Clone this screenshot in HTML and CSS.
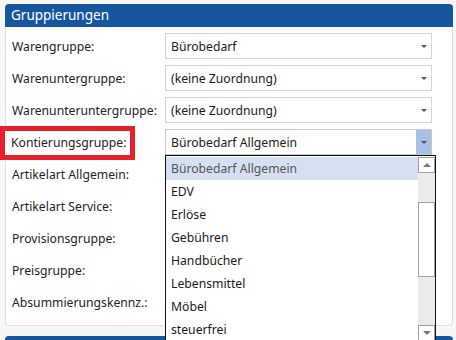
FILE: index.html
```html
<!DOCTYPE html>
<html>
<head>
<title>Gruppierungen</title>
<link rel="stylesheet" href="styles.css">
</head>
<body>
<div class="page">
	<div class="panel">
		<div class="panel_head">Gruppierungen</div>
		<div class="panel_body">
			<div class="row">
				<span class="lbl">Warengruppe:</span>
				<div class="combo"><span>Bürobedarf</span><i class="arrow"></i></div>
			</div>
			<div class="row">
				<span class="lbl">Warenuntergruppe:</span>
				<div class="combo"><span>(keine Zuordnung)</span><i class="arrow"></i></div>
			</div>
			<div class="row">
				<span class="lbl">Warenunteruntergruppe:</span>
				<div class="combo"><span>(keine Zuordnung)</span><i class="arrow"></i></div>
			</div>
			<div class="row">
				<span class="lbl marked"><span class="mark">Kontierungsgruppe:</span></span>
				<div class="combo open"><span>Bürobedarf Allgemein</span><i class="arrow"></i></div>
			</div>
			<div class="row"><span class="lbl">Artikelart Allgemein:</span></div>
			<div class="row"><span class="lbl">Artikelart Service:</span></div>
			<div class="row"><span class="lbl">Provisionsgruppe:</span></div>
			<div class="row"><span class="lbl">Preisgruppe:</span></div>
			<div class="row"><span class="lbl">Absummierungskennz.:</span></div>
		</div>
	</div>
	<div class="panel next">
		<div class="panel_head">&nbsp;</div>
	</div>

	<div class="droplist">
		<ul class="items">
			<li class="sel">Bürobedarf Allgemein</li>
			<li>EDV</li>
			<li>Erlöse</li>
			<li>Gebühren</li>
			<li>Handbücher</li>
			<li>Lebensmittel</li>
			<li>Möbel</li>
			<li>steuerfrei</li>
		</ul>
		<div class="scroll">
			<div class="sbtn"><i class="up"></i></div>
			<div class="track"><div class="thumb"></div></div>
			<div class="sbtn"><i class="down"></i></div>
		</div>
	</div>
</div>
</body>
</html>
```

FILE: styles.css
```css
body
{
	margin : 0;
	background-color : #ffffff;
	font-family : "Noto Sans", "Open Sans", sans-serif;
	font-size : 12.2px;
	color : #222222;
	overflow : hidden;
}
.page
{
	position : relative;
	padding : 4px 5px 0 5px;
	height : 340px;
	box-sizing : border-box;
	background-color : #f7f7f7;
	overflow : hidden;
}
.panel
{
	width : 446px;
	background-color : #ffffff;
	border : 1px solid #e0e0e0;
	border-top : none;
	border-radius : 4px;
}
.panel.next
{
	margin-top : 10px;
}
.panel_head
{
	height : 23px;
	line-height : 23px;
	padding-left : 6px;
	margin : 0 -1px;
	border-radius : 4px 4px 0 0;
	background-color : #15579e;
	color : #ffffff;
	font-size : 13.5px;
}
.panel_body
{
	padding : 6px 0 10px 0;
	display : flex;
	flex-direction : column;
	gap : 6px;
}
.row
{
	display : flex;
	align-items : center;
	height : 26px;
}
.lbl
{
	width : 153px;
	padding-left : 6px;
	flex : none;
}
.lbl.marked
{
	width : 165px;
	padding-left : 0;
	margin-left : -6px;
	margin-top : 2px;
	position : relative;
	z-index : 1;
}
.mark
{
	display : inline-block;
	padding : 3px 3px 4px 6px;
	border : 5px solid #e8202a;
	background-color : #ffffff;
}
.combo
{
	position : relative;
	width : 267px;
	height : 26px;
	box-sizing : border-box;
	border : 1px solid #d4d4d4;
	display : flex;
	align-items : center;
	padding-left : 5px;
	color : #1a1a1a;
}
.arrow
{
	position : absolute;
	right : 0;
	top : 0;
	width : 15px;
	height : 24px;
}
.arrow::after
{
	content : "";
	position : absolute;
	left : 5px;
	top : 11px;
	border-left : 3px solid transparent;
	border-right : 3px solid transparent;
	border-top : 3px solid #555555;
}
.combo.open
{
	border-color : #c8c8c8;
}
.combo.open .arrow
{
	background-color : #a6c1e6;
}
.droplist
{
	position : absolute;
	left : 165px;
	top : 155px;
	width : 271px;
	height : 200px;
	box-sizing : border-box;
	border : 1px solid #111111;
	background-color : #ffffff;
	display : flex;
	padding-top : 1px;
}
.items
{
	list-style : none;
	margin : 0;
	padding : 0;
	flex : 1;
}
.items li
{
	height : 23px;
	line-height : 23px;
	padding-left : 5px;
	color : #1a1a1a;
}
.items li.sel
{
	background-color : #d5e1f2;
	color : #555555;
}
.scroll
{
	width : 17px;
	display : flex;
	flex-direction : column;
	background-color : #ebebeb;
}
.sbtn
{
	position : relative;
	height : 16px;
	box-sizing : border-box;
	border : 1px solid #a0a0a0;
	background-color : #ffffff;
}
.up, .down
{
	position : absolute;
	left : 4px;
	top : 5px;
	border-left : 4px solid transparent;
	border-right : 4px solid transparent;
}
.up
{
	border-bottom : 4px solid #7a7a7a;
}
.down
{
	border-top : 4px solid #7a7a7a;
}
.track
{
	height : 152px;
	padding-top : 29px;
	box-sizing : border-box;
}
.thumb
{
	height : 75px;
	box-sizing : border-box;
	border : 1px solid #a0a0a0;
	background-color : #ffffff;
}
```
